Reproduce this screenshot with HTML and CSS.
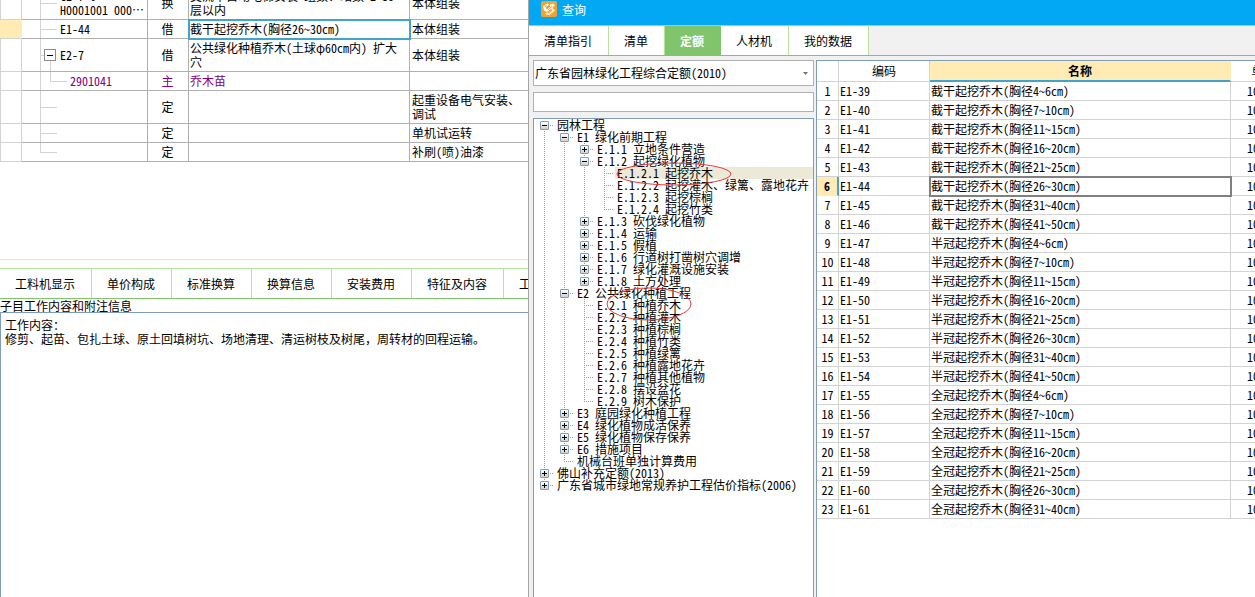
FILE: index.html
```html
<!DOCTYPE html>
<html lang="zh-CN">
<head>
<meta charset="utf-8">
<title>查询</title>
<link rel="stylesheet" href="styles.css">
</head>
<body>
<div class="app">
  <main class="editor">
    <div class="bill">
      <table class="bill-table">
        <colgroup><col class="c-mark"><col class="c-code"><col class="c-type"><col class="c-name"><col class="c-part"></colgroup>
        <tbody>
          <tr class="double"><td></td><td class="branch">C1-7-6<br>H0001001 000…</td><td>换</td><td>交流半自动电梯安装 组数、站数 2~30<br>层以内</td><td>本体组装</td></tr>
          <tr class="current"><td></td><td class="branch">E1-44</td><td>借</td><td class="selected">截干起挖乔木(胸径26~30cm)</td><td>本体组装</td></tr>
          <tr class="double"><td></td><td class="branch parent"><div class="node"><button class="fold" aria-label="折叠 E2-7"></button>E2-7</div></td><td>借</td><td>公共绿化种植乔木(土球φ60cm内) 扩大穴</td><td>本体组装</td></tr>
          <tr class="material"><td></td><td class="branch child">2901041</td><td>主</td><td>乔木苗</td><td></td></tr>
          <tr class="double"><td></td><td class="branch"></td><td>定</td><td></td><td>起重设备电气安装、调试</td></tr>
          <tr><td></td><td class="branch"></td><td>定</td><td></td><td>单机试运转</td></tr>
          <tr><td></td><td class="branch end"></td><td>定</td><td></td><td>补刷(喷)油漆</td></tr>
        </tbody>
      </table>
    </div>
    <nav class="tabs detail-tabs">
      <button>工料机显示</button><button>单价构成</button><button>标准换算</button><button>换算信息</button><button>安装费用</button><button>特征及内容</button><button>工程量明细</button>
    </nav>
    <h2 class="note-title">子目工作内容和附注信息</h2>
    <section class="note">
      <p>工作内容：</p>
      <p>修剪、起苗、包扎土球、原土回填树坑、场地清理、清运树枝及树尾，周转材的回程运输。</p>
    </section>
  </main>

  <aside class="query">
    <header class="titlebar">
      <svg class="logo" viewBox="0 0 16 16" aria-hidden="true">
        <rect width="16" height="16" rx="2" fill="#f7a12b"/>
        <path d="M2 5 6.500 2.500 8 4 4.500 6.500 6 8.500 9 6 10.500 7.500 6 11 3 9.500Z" fill="#fff"/>
        <path d="M9 3.500 12 2.500 14 4 11.500 7 14 9.500 8.500 14 5 13.500 4 12 7.500 11.500 11 8.500 9 6.500Z" fill="#fff4df"/>
        <path d="m7 9 4-3.500M7 12l4-2.500M4 5.500 6 4.500" fill="none" stroke="#f7a12b"/>
      </svg>
      <h1>查询</h1>
    </header>
    <nav class="tabs query-tabs">
      <button>清单指引</button><button>清单</button><button class="active">定额</button><button>人材机</button><button>我的数据</button>
    </nav>
    <div class="query-body">
      <div class="side">
        <div class="library">
          <select aria-label="定额库"><option>广东省园林绿化工程综合定额(2010)</option></select>
          <svg viewBox="0 0 5 3" aria-hidden="true"><path d="M0 0h5L2.500 3Z" fill="#6b7480"/></svg>
        </div>
        <input class="search" type="text" aria-label="搜索">
        <div class="tree">
          <ul>
            <li><div class="row"><button class="open" aria-label="折叠"></button><span>园林工程</span></div>
              <ul>
                <li><div class="row"><button class="open" aria-label="折叠"></button><span>E1 绿化前期工程</span></div>
                  <ul>
                    <li><div class="row"><button aria-label="展开"></button><span>E.1.1 立地条件营造</span></div></li>
                    <li><div class="row"><button class="open" aria-label="折叠"></button><span>E.1.2 起挖绿化植物</span></div>
                      <ul>
                        <li><div class="row leaf picked"><span>E.1.2.1 起挖乔木</span>
                          <svg class="ring ring-a" viewBox="0 0 116 24" aria-hidden="true"><ellipse cx="58" cy="12" rx="57" ry="11"/></svg></div></li>
                        <li><div class="row leaf"><span>E.1.2.2 起挖灌木、绿篱、露地花卉</span></div></li>
                        <li><div class="row leaf"><span>E.1.2.3 起挖棕榈</span></div></li>
                        <li><div class="row leaf"><span>E.1.2.4 起挖竹类</span></div></li>
                      </ul></li>
                    <li><div class="row"><button aria-label="展开"></button><span>E.1.3 砍伐绿化植物</span></div></li>
                    <li><div class="row"><button aria-label="展开"></button><span>E.1.4 运输</span></div></li>
                    <li><div class="row"><button aria-label="展开"></button><span>E.1.5 假植</span></div></li>
                    <li><div class="row"><button aria-label="展开"></button><span>E.1.6 行道树打凿树穴调增</span></div></li>
                    <li><div class="row"><button aria-label="展开"></button><span>E.1.7 绿化灌溉设施安装</span></div></li>
                    <li><div class="row"><button aria-label="展开"></button><span>E.1.8 土方处理</span></div></li>
                  </ul></li>
                <li><div class="row"><button class="open" aria-label="折叠"></button><span>E2 公共绿化种植工程</span></div>
                  <ul>
                    <li><div class="row leaf"><span>E.2.1 种植乔木</span>
                      <svg class="ring ring-b" viewBox="0 0 86 34" aria-hidden="true"><ellipse cx="43" cy="17" rx="42" ry="16"/></svg></div></li>
                    <li><div class="row leaf"><span>E.2.2 种植灌木</span></div></li>
                    <li><div class="row leaf"><span>E.2.3 种植棕榈</span></div></li>
                    <li><div class="row leaf"><span>E.2.4 种植竹类</span></div></li>
                    <li><div class="row leaf"><span>E.2.5 种植绿篱</span></div></li>
                    <li><div class="row leaf"><span>E.2.6 种植露地花卉</span></div></li>
                    <li><div class="row leaf"><span>E.2.7 种植其他植物</span></div></li>
                    <li><div class="row leaf"><span>E.2.8 摆设盆花</span></div></li>
                    <li><div class="row leaf"><span>E.2.9 树木保护</span></div></li>
                  </ul></li>
                <li><div class="row"><button aria-label="展开"></button><span>E3 庭园绿化种植工程</span></div></li>
                <li><div class="row"><button aria-label="展开"></button><span>E4 绿化植物成活保养</span></div></li>
                <li><div class="row"><button aria-label="展开"></button><span>E5 绿化植物保存保养</span></div></li>
                <li><div class="row"><button aria-label="展开"></button><span>E6 措施项目</span></div></li>
                <li><div class="row leaf"><span>机械台班单独计算费用</span></div></li>
              </ul></li>
            <li><div class="row"><button aria-label="展开"></button><span>佛山补充定额(2013)</span></div></li>
            <li><div class="row"><button aria-label="展开"></button><span>广东省城市绿地常规养护工程估价指标(2006)</span></div></li>
          </ul>
        </div>
      </div>
      <div class="quota">
        <table class="quota-table">
          <colgroup><col class="q-no"><col class="q-code"><col class="q-name"><col class="q-unit"></colgroup>
          <thead><tr><th></th><th>编码</th><th class="sorted">名称</th><th>单位</th></tr></thead>
          <tbody>
            <tr><th>1</th><td>E1-39</td><td>截干起挖乔木(胸径4~6cm)</td><td>10株</td></tr>
            <tr><th>2</th><td>E1-40</td><td>截干起挖乔木(胸径7~10cm)</td><td>10株</td></tr>
            <tr><th>3</th><td>E1-41</td><td>截干起挖乔木(胸径11~15cm)</td><td>10株</td></tr>
            <tr><th>4</th><td>E1-42</td><td>截干起挖乔木(胸径16~20cm)</td><td>10株</td></tr>
            <tr><th>5</th><td>E1-43</td><td>截干起挖乔木(胸径21~25cm)</td><td>10株</td></tr>
            <tr class="current"><th>6</th><td>E1-44</td><td class="selected">截干起挖乔木(胸径26~30cm)</td><td>10株</td></tr>
            <tr><th>7</th><td>E1-45</td><td>截干起挖乔木(胸径31~40cm)</td><td>10株</td></tr>
            <tr><th>8</th><td>E1-46</td><td>截干起挖乔木(胸径41~50cm)</td><td>10株</td></tr>
            <tr><th>9</th><td>E1-47</td><td>半冠起挖乔木(胸径4~6cm)</td><td>10株</td></tr>
            <tr><th>10</th><td>E1-48</td><td>半冠起挖乔木(胸径7~10cm)</td><td>10株</td></tr>
            <tr><th>11</th><td>E1-49</td><td>半冠起挖乔木(胸径11~15cm)</td><td>10株</td></tr>
            <tr><th>12</th><td>E1-50</td><td>半冠起挖乔木(胸径16~20cm)</td><td>10株</td></tr>
            <tr><th>13</th><td>E1-51</td><td>半冠起挖乔木(胸径21~25cm)</td><td>10株</td></tr>
            <tr><th>14</th><td>E1-52</td><td>半冠起挖乔木(胸径26~30cm)</td><td>10株</td></tr>
            <tr><th>15</th><td>E1-53</td><td>半冠起挖乔木(胸径31~40cm)</td><td>10株</td></tr>
            <tr><th>16</th><td>E1-54</td><td>半冠起挖乔木(胸径41~50cm)</td><td>10株</td></tr>
            <tr><th>17</th><td>E1-55</td><td>全冠起挖乔木(胸径4~6cm)</td><td>10株</td></tr>
            <tr><th>18</th><td>E1-56</td><td>全冠起挖乔木(胸径7~10cm)</td><td>10株</td></tr>
            <tr><th>19</th><td>E1-57</td><td>全冠起挖乔木(胸径11~15cm)</td><td>10株</td></tr>
            <tr><th>20</th><td>E1-58</td><td>全冠起挖乔木(胸径16~20cm)</td><td>10株</td></tr>
            <tr><th>21</th><td>E1-59</td><td>全冠起挖乔木(胸径21~25cm)</td><td>10株</td></tr>
            <tr><th>22</th><td>E1-60</td><td>全冠起挖乔木(胸径26~30cm)</td><td>10株</td></tr>
            <tr><th>23</th><td>E1-61</td><td>全冠起挖乔木(胸径31~40cm)</td><td>10株</td></tr>
          </tbody>
        </table>
      </div>
    </div>
  </aside>
</div>
</body>
</html>
```

FILE: styles.css
```css
* { box-sizing: border-box; }

:root {
  --line: #b0b0b0;
  --line-light: #d3d3d3;
  --frame: #7f9db9;
  --green: #80c46c;
  --green-light: #b5e29f;
  --yellow: #ffebb3;
  --blue: #3fa5d0;
  --dot: #a09f86;
}

body {
  margin: 0;
  background: #fff;
  color: #000;
}

body, button, select, input {
  font-family: "Noto Sans CJK SC", "Liberation Sans", sans-serif;
  font-size: 12px;
  line-height: 14px;
  font-feature-settings: "hwid";
}

h1, h2, p, ul { margin: 0; padding: 0; font-size: 12px; font-weight: 400; }
button { margin: 0; padding: 0; border: 0; background: #fff; color: inherit; }
table { border-collapse: separate; border-spacing: 0; table-layout: fixed; }

.app {
  display: grid;
  grid-template-columns: minmax(0, 528fr) minmax(0, 727fr);
  height: 100vh;
  overflow: hidden;
}

/* Bill editor */
.editor {
  display: flex;
  flex-direction: column;
  min-width: 0;
  overflow: hidden;
}

.bill {
  flex: 0 0 260px;
  margin-bottom: 8px;
  overflow: hidden;
  border-bottom: 1px solid #e2e2e2;
}

/* the list is scrolled part of a row down */
.bill-table { width: 100%; margin-top: -13px; }
.c-mark { width: 22px; }
.c-code { width: 126px; }
.c-type { width: 41px; }
.c-name { width: 221px; }

.bill-table td {
  height: 19px;
  padding: 0 2px 0 1px;
  border-right: 1px solid var(--line);
  border-bottom: 1px solid var(--line);
  word-break: break-all;
}
.bill-table .double td { height: 33px; }
.bill-table td:first-child { border-color: var(--line-light); box-shadow: inset 1px 0 var(--line-light); }
.bill-table td:last-child { border-right: 0; padding-left: 2px; }
.bill-table td:nth-child(3) { text-align: center; }
.bill-table .current td:first-child { background: var(--yellow); border-right-color: var(--yellow); box-shadow: none; }
.bill-table .material { color: #800080; }
.bill-table td.selected { outline: 2px solid var(--blue); outline-offset: -1px; }

.bill-table td.branch {
  padding-left: 38px;
  white-space: nowrap;
  background-image: linear-gradient(var(--line-light), var(--line-light)), linear-gradient(var(--line-light), var(--line-light));
  background-repeat: no-repeat;
  background-position: 18px 0, 18px 50%;
  background-size: 1px 100%, 17px 1px;
  background-clip: border-box;
}
.bill-table td.end { background-size: 1px 50%, 17px 1px; }
.bill-table td.parent {
  padding-left: 22px;
  background-image: linear-gradient(var(--line-light), var(--line-light)), linear-gradient(var(--line-light), var(--line-light)), linear-gradient(var(--line-light), var(--line-light));
  background-position: 18px 0, 18px 50%, 28px 100%;
  background-size: 1px 100%, 4px 1px, 1px 50%;
}
.bill-table td.child {
  padding-left: 48px;
  background-image: linear-gradient(var(--line-light), var(--line-light)), linear-gradient(var(--line-light), var(--line-light)), linear-gradient(var(--line-light), var(--line-light));
  background-position: 18px 0, 28px 50%, 28px 0;
  background-size: 1px 100%, 17px 1px, 1px 50%;
}
.node { display: flex; align-items: center; gap: 4px; }
.fold {
  width: 12px;
  height: 12px;
  border: 1px solid #8c8c8c;
  background: linear-gradient(#000, #000) center / 6px 1px no-repeat #fff;
}

/* Tab strips */
.tabs {
  display: flex;
  border-top: 1px solid var(--green-light);
  border-bottom: 1px solid var(--green);
  overflow: hidden;
}
.tabs button {
  flex: none;
  padding: 0 16px 0 15px;
  border-right: 1px solid var(--green-light);
  white-space: nowrap;
}
.detail-tabs { flex: 0 0 31px; }
.query-tabs { flex: 0 0 31px; border-top-color: #8fd0d0; }
.query-tabs .active {
  background: var(--green);
  border-color: var(--green);
  color: #fff;
  font-weight: 700;
}

.note-title { flex: 0 0 13px; line-height: 13px; }
.note {
  flex: 1;
  padding: 5px 4px;
  border: solid var(--frame);
  border-width: 1px 0 0 1px;
  font-feature-settings: normal;
}

/* Query window */
.query {
  display: flex;
  flex-direction: column;
  min-width: 0;
  border-left: 1px solid #a5a5a5;
  background: #f1f1f1;
}
.titlebar {
  flex: 0 0 25px;
  display: flex;
  align-items: flex-start;
  gap: 5px;
  padding: 1px 12px;
  background: #02a8f3;
  color: #fff;
}
.titlebar h1 { line-height: 17px; }
.logo { width: 16px; height: 16px; }

.query-body {
  flex: 1;
  display: grid;
  grid-template-columns: 281px minmax(0, 1fr);
  gap: 2px;
  min-height: 0;
  padding: 4px 0 0 4px;
}
.side { display: flex; flex-direction: column; gap: 6px; min-height: 0; }

.library { position: relative; }
.library select {
  display: block;
  width: 100%;
  height: 26px;
  padding: 0 16px 0 1px;
  border: 1px solid var(--line);
  border-radius: 0;
  appearance: none;
  background: #fff;
  color: #000;
}
.library svg { position: absolute; right: 6px; top: 12px; width: 5px; height: 3px; }
.search {
  width: 100%;
  height: 20px;
  padding: 0 2px;
  border: 1px solid var(--line);
  background: #fff;
}

.tree {
  flex: 1;
  padding-left: 6px;
  border: 1px solid var(--frame);
  border-bottom: 0;
  background: #fff;
  overflow: hidden;
}
.tree ul { list-style: none; }
.tree ul ul { padding-left: 20px; }
.tree li {
  background: repeating-linear-gradient(var(--dot) 0 1px, transparent 1px 2px) 4px 0 / 1px 100% no-repeat;
}
.tree li:last-child { background-size: 1px 6px; }
.tree > ul > li:first-child { background-position: 4px 6px; }
.row {
  position: relative;
  display: flex;
  align-items: center;
  gap: 6px;
  height: 12px;
  background: repeating-linear-gradient(90deg, var(--dot) 0 1px, transparent 1px 2px) 4px 6px / 10px 1px no-repeat;
}
.row.leaf { padding-left: 15px; }
.row span { flex: 1; padding-left: 2px; line-height: 12px; white-space: nowrap; }
.row.picked span { background: #ece9d8; }
.row button {
  flex: none;
  width: 9px;
  height: 9px;
  border: 1px solid var(--frame);
  border-radius: 1px;
  background:
    linear-gradient(#000, #000) center / 5px 1px no-repeat,
    linear-gradient(#000, #000) center / 1px 5px no-repeat,
    linear-gradient(#fff, #d5d0c4);
}
.row button.open {
  background:
    linear-gradient(#000, #000) center / 5px 1px no-repeat,
    linear-gradient(#fff, #d5d0c4);
}
.ring { position: absolute; z-index: 1; fill: none; stroke: #e8393c; stroke-width: 1; }
.ring-a { left: 16px; top: -5px; width: 116px; height: 24px; }
.ring-b { left: 26px; top: -12px; width: 86px; height: 34px; }

/* Quota list */
.quota {
  border: solid var(--frame);
  border-width: 1px 0 0 1px;
  background: #fff;
  overflow: hidden;
}
.quota-table { width: 480px; }
.q-no { width: 22px; }
.q-code { width: 91px; }
.q-name { width: 301px; }
.q-unit { width: 66px; }
.quota-table th, .quota-table td {
  height: 19px;
  padding: 0 1px;
  border-right: 1px solid var(--line-light);
  border-bottom: 1px solid var(--line-light);
  font-weight: 400;
  text-align: left;
  white-space: nowrap;
}
.quota-table th { padding: 0; text-align: center; }
.quota-table thead th { height: 21px; }
.quota-table thead .sorted {
  background: var(--yellow);
  border-bottom: 2px solid var(--blue);
  border-right-color: var(--yellow);
  font-weight: 700;
}
.quota-table td:last-child { padding-left: 16px; }
.quota-table .current th {
  background: var(--yellow);
  border-right: 2px solid var(--blue);
  border-bottom-color: var(--yellow);
  font-weight: 700;
}
.quota-table td.selected { outline: 2px solid #808080; outline-offset: -1px; }
```
